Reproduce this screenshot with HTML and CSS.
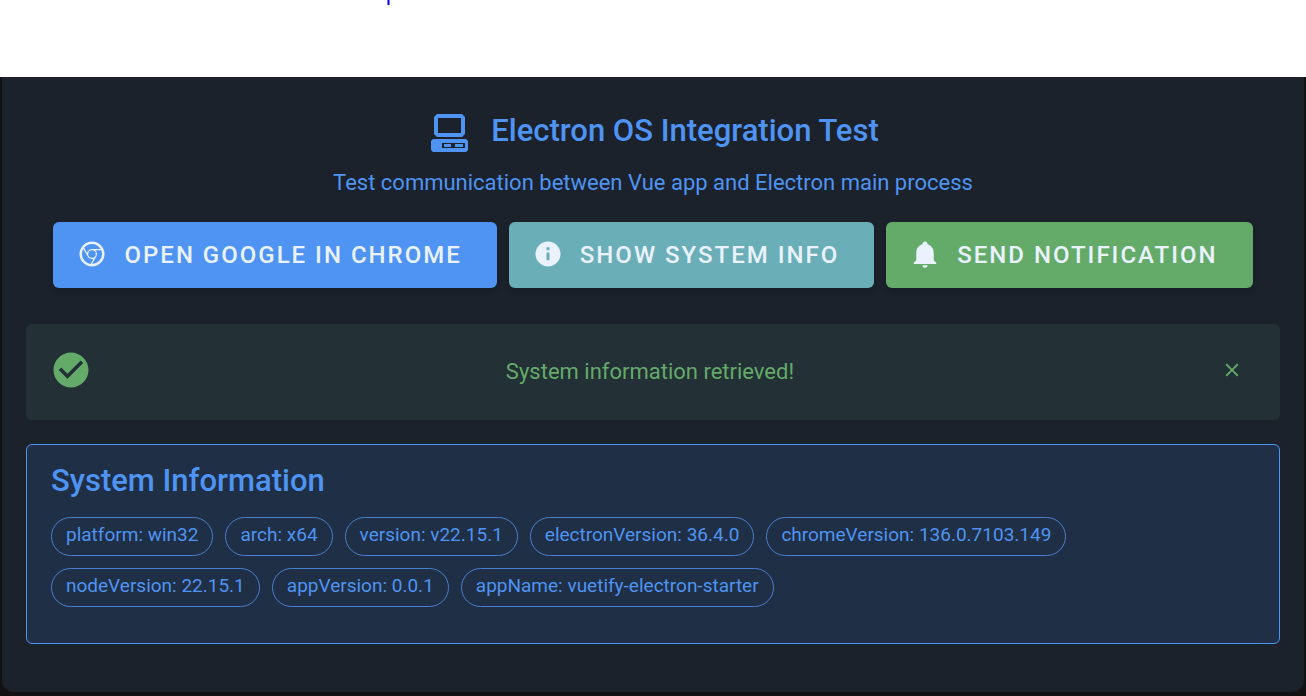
FILE: index.html
```
<!DOCTYPE html>
<html lang="en">
<head>
<meta charset="utf-8">
<title>Electron OS Integration Test</title>
<link rel="stylesheet" href="styles.css">
</head>
<body>
<div class="top"><div class="link-tail"></div></div>
<main class="app">
  <section class="card">
    <header class="header">
      <h1 class="title">
        <svg class="computer" viewBox="0 0 37 38" aria-hidden="true"><path fill-rule="evenodd" d="M6 0H31L34 3V20L31 23H6L3 20V3ZM7 4V19H30V4ZM2 25H35L37 27V36L35 38H2L0 36V27ZM11 29V34H34V29ZM13 30H20V33H13ZM24 30H32V33H24Z"/></svg>
        <span>Electron OS Integration Test</span>
      </h1>
      <p class="subtitle">Test communication between Vue app and Electron main process</p>
    </header>
    <div class="actions">
      <button class="btn primary" type="button">
        <svg class="btn-icon" viewBox="0 0 24 24" aria-hidden="true"><path fill-rule="evenodd" d="M12,20L15.46,14H15.45C15.79,13.4 16,12.73 16,12C16,10.8 15.46,9.73 14.62,9H19.41C19.79,9.93 20,10.94 20,12A8,8 0 0,1 12,20M4,12C4,10.54 4.39,9.18 5.07,8L8.54,14H8.55C9.24,15.19 10.5,16 12,16C12.45,16 12.88,15.91 13.29,15.77L10.89,19.91C7,19.37 4,16.04 4,12M15,12A3,3 0 0,1 12,15A3,3 0 0,1 9,12A3,3 0 0,1 12,9A3,3 0 0,1 15,12M12,4C14.96,4 17.54,5.61 18.92,8H12C10.06,8 8.45,9.38 8.08,11.21L5.7,7.08C7.16,5.21 9.44,4 12,4M12,2A10,10 0 0,0 2,12A10,10 0 0,0 12,22A10,10 0 0,0 22,12A10,10 0 0,0 12,2Z"/></svg>
        <span>Open Google in Chrome</span>
      </button>
      <button class="btn info" type="button">
        <svg class="btn-icon" viewBox="0 0 24 24" aria-hidden="true"><path fill-rule="evenodd" d="M13.2,9H10.8V6.6H13.2M13.2,17H10.8V10.8H13.2M12,2A10,10 0 0,0 2,12A10,10 0 0,0 12,22A10,10 0 0,0 22,12A10,10 0 0,0 12,2Z"/></svg>
        <span>Show System Info</span>
      </button>
      <button class="btn success" type="button">
        <svg class="btn-icon" viewBox="0 0 24 24" aria-hidden="true"><path d="M21,19V20H3V19L5,17V11C5,7.9 7.03,5.17 10,4.29C10,4.19 10,4.1 10,4A2,2 0 0,1 12,2A2,2 0 0,1 14,4C14,4.1 14,4.19 14,4.29C16.97,5.17 19,7.9 19,11V17L21,19M14,21A2,2 0 0,1 12,23A2,2 0 0,1 10,21"/></svg>
        <span>Send Notification</span>
      </button>
    </div>
    <div class="alert" role="alert">
      <svg class="alert-icon" viewBox="0 0 24 24" aria-hidden="true"><path fill-rule="evenodd" d="M12 2C6.5 2 2 6.5 2 12S6.5 22 12 22 22 17.5 22 12 17.5 2 12 2M10 17L5 12L6.41 10.59L10 14.17L17.59 6.58L19 8L10 17Z"/></svg>
      <p class="alert-text">System information retrieved!</p>
      <button class="close" type="button" aria-label="Close">
        <svg class="close-icon" viewBox="0 0 24 24" aria-hidden="true"><path d="M19,6.41L17.59,5L12,10.59L6.41,5L5,6.41L10.59,12L5,17.59L6.41,19L12,13.41L17.59,19L19,17.59L13.41,12L19,6.41Z"/></svg>
      </button>
    </div>
    <section class="panel">
      <h2 class="panel-title">System Information</h2>
      <ul class="chips">
        <li class="chip">platform: win32</li>
        <li class="chip">arch: x64</li>
        <li class="chip">version: v22.15.1</li>
        <li class="chip">electronVersion: 36.4.0</li>
        <li class="chip">chromeVersion: 136.0.7103.149</li>
        <li class="chip">nodeVersion: 22.15.1</li>
        <li class="chip">appVersion: 0.0.1</li>
        <li class="chip">appName: vuetify-electron-starter</li>
      </ul>
    </section>
  </section>
</main>
</body>
</html>
```
FILE: styles.css
```
* { box-sizing: border-box; }
body {
  margin: 0;
  min-height: 100vh;
  display: flex;
  flex-direction: column;
  background: #fff;
  font-family: Roboto, "Liberation Sans", sans-serif;
}
h1, h2, p, ul { margin: 0; padding: 0; font-weight: 400; }
svg { display: block; fill: currentColor; flex: none; }
button { font: inherit; border: 0; cursor: pointer; }

.top { height: 77px; padding-left: 387px; }
.link-tail { width: 3px; height: 5px; border: solid #7777ff; border-width: 0 1px; background: #0000ff; }

.app { flex: 1; background: #121212; padding: 0 2px 4px; }
.card {
  min-height: 100%;
  padding: 30px 24px 48px;
  background: #1b222c;
  border-radius: 0 0 12px 12px;
  color: #4f94f2;
}
.header { text-align: center; }
.title {
  display: flex;
  justify-content: center;
  align-items: center;
  gap: 23px;
  padding-left: 4px;
  font-size: 31px;
  line-height: 48px;
  font-weight: 500;
}
.computer { width: 37px; height: 38px; margin-top: 4px; }
.subtitle { margin-top: 12px; font-size: 22px; line-height: 32px; }

.actions {
  display: flex;
  flex-wrap: wrap;
  justify-content: center;
  gap: 12px;
  margin-top: 23px;
}
.btn {
  display: flex;
  align-items: center;
  height: 66px;
  gap: 17px;
  padding: 0 35px 2px 24px;
  border-radius: 6px;
  color: #eaf2fe;
  font-size: 24px;
  font-weight: 500;
  line-height: 32px;
  letter-spacing: 2px;
  text-transform: uppercase;
  white-space: nowrap;
  box-shadow: 0 3px 6px rgba(0, 0, 0, .15);
}
.btn span { padding-top: 2px; }
.btn-icon { width: 30px; height: 30px; }
.primary { background: #4f94f2; }
.info { background: #6aaeb8; }
.success { background: #64ab6a; }

.alert {
  display: flex;
  align-items: center;
  gap: 24px;
  min-height: 96px;
  margin-top: 36px;
  padding: 22px 24px 26px;
  border-radius: 6px;
  background: #233035;
  color: #64ab6a;
}
.alert-icon { width: 42px; height: 42px; }
.alert-text { flex: 1; padding-top: 4px; text-align: center; font-size: 22px; line-height: 32px; }
.close {
  display: flex;
  align-items: center;
  justify-content: center;
  width: 48px;
  height: 48px;
  padding: 0;
  background: none;
  color: inherit;
}
.close-icon { width: 22px; height: 22px; }

.panel {
  margin-top: 24px;
  padding: 12px 24px 36px;
  border: 1px solid #4f94f2;
  border-radius: 6px;
  background: #1f2f45;
}
.panel-title { font-size: 31px; line-height: 48px; font-weight: 500; }
.chips {
  display: flex;
  flex-wrap: wrap;
  gap: 12px;
  margin-top: 12px;
  list-style: none;
}
.chip {
  height: 39px;
  padding: 0 14px;
  border: 1px solid #4780cf;
  border-radius: 20px;
  font-size: 19px;
  line-height: 34px;
}
```
